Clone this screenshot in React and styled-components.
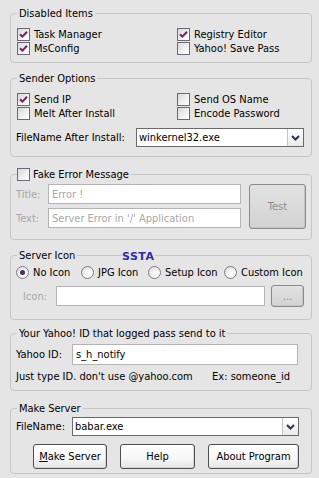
import React from "react";
import styled, { createGlobalStyle } from "styled-components";

const Global = createGlobalStyle`
  html, body { margin: 0; padding: 0; background: #e5e5e5; }
  body { font-family: "DejaVu Sans Condensed", "Liberation Sans", Arial, sans-serif; font-size: 11px; color: #000; }
  * { box-sizing: border-box; }
`;

const Page = styled.div`
  width: 302px;
  margin-left: 10px;
  padding-top: 6px;
  display: flex;
  flex-direction: column;
`;

const Group = styled.fieldset`
  position: relative;
  margin: ${(p) => p.$mt || 0}px 0 0 0;
  padding: ${(p) => p.$pt || 0}px 6px ${(p) => p.$pb || 0}px 5px;
  border: 1px solid #c6c6c6;
  border-radius: 4px;
  min-width: 0;
`;

const Legend = styled.legend`
  margin-left: 1px;
  padding: ${(p) => (p.$flush ? "0 2px 0 0" : "0 2px")};
  line-height: 15px;
  height: 15px;
`;

const LegendInner = styled.span`
  display: inline-flex;
  align-items: center;
  gap: 3px;
`;

const Grid2 = styled.div`
  display: grid;
  grid-template-columns: 160px 1fr;
  grid-auto-rows: 14px;
`;

const CheckRow = styled.label`
  display: flex;
  align-items: center;
  gap: 4px;
  height: 14px;
  padding-left: 1px;
  white-space: nowrap;
`;

const Box = styled.span`
  width: 13px;
  height: 13px;
  flex: none;
  border: 1px solid #6d6878;
  background: linear-gradient(135deg, #d8d8d8 0%, #f2f2f2 60%, #ffffff 100%);
  display: inline-flex;
  align-items: center;
  justify-content: center;
`;

const CheckBox = ({ checked }) => (
  <Box>
    {checked && (
      <svg width="9" height="9" viewBox="0 0 9 9">
        <path d="M1 4.2 L3.4 6.6 L8 1.8" fill="none" stroke="#7a1f58" strokeWidth="2" />
      </svg>
    )}
  </Box>
);

const Row = styled.div`
  display: flex;
  align-items: center;
  margin-top: ${(p) => p.$mt || 0}px;
  height: ${(p) => p.$h}px;
  gap: ${(p) => p.$gap || 0}px;
`;

const FieldLabel = styled.span`
  width: ${(p) => p.$w}px;
  flex: none;
  color: ${(p) => (p.$dim ? "#a8a8a8" : "#000")};
  padding-left: ${(p) => p.$pl || 0}px;
  white-space: nowrap;
`;

const TextInput = styled.div`
  width: ${(p) => p.$w}px;
  height: ${(p) => p.$h}px;
  flex: none;
  background: #fff;
  border: 1px solid ${(p) => (p.$dark ? "#6e6e6e" : "#b4b4b4")};
  color: ${(p) => (p.$dim ? "#a8a8a8" : "#000")};
  display: flex;
  align-items: center;
  padding-left: 3px;
  white-space: nowrap;
  overflow: hidden;
`;

const ComboWrap = styled.div`
  width: ${(p) => p.$w}px;
  height: ${(p) => p.$h}px;
  flex: none;
  background: #fff;
  border: 1px solid #6a6a6a;
  display: flex;
  align-items: stretch;
`;

const ComboText = styled.span`
  flex: 1;
  display: flex;
  align-items: center;
  padding-left: 2px;
`;

const ComboBtn = styled.span`
  width: 16px;
  border-left: 1px solid #c4c4c4;
  background: linear-gradient(180deg, #ffffff, #e9e9e9);
  display: flex;
  align-items: center;
  justify-content: center;
`;

const Combo = ({ w, h, value }) => (
  <ComboWrap $w={w} $h={h}>
    <ComboText>{value}</ComboText>
    <ComboBtn>
      <svg width="9" height="6" viewBox="0 0 9 6">
        <path d="M1 1 L4.5 4.5 L8 1" fill="none" stroke="#2a3550" strokeWidth="2" />
      </svg>
    </ComboBtn>
  </ComboWrap>
);

const Button = styled.button`
  width: ${(p) => p.$w}px;
  height: ${(p) => p.$h}px;
  flex: none;
  margin-left: ${(p) => p.$ml || 0}px;
  font: inherit;
  color: ${(p) => (p.$disabled ? "#8c8c8c" : "#000")};
  border: 1px solid ${(p) => (p.$disabled ? "#8a8a8a" : "#4d4d4d")};
  border-radius: 3px;
  background: ${(p) =>
    p.$disabled
      ? "linear-gradient(180deg, #e2e2e2, #d2d2d2)"
      : "linear-gradient(180deg, #ffffff 0%, #f6f6f6 60%, #e4e4e4 100%)"};
  box-shadow: inset -1px -1px 0 ${(p) => (p.$disabled ? "#c6c6c6" : "#d6d6d6")};
  padding: 0;
  display: flex;
  align-items: center;
  justify-content: center;
`;

const Under = styled.span`
  text-decoration: underline;
`;

const FakeGrid = styled.div`
  display: flex;
  gap: 8px;
`;

const FakeFields = styled.div`
  display: flex;
  flex-direction: column;
  gap: 4px;
`;

const RadioGrid = styled.div`
  display: grid;
  grid-template-columns: 65px 67px 76px auto;
  height: 14px;
`;

const RadioItem = styled.label`
  display: flex;
  align-items: center;
  gap: 4px;
  white-space: nowrap;
`;

const RadioCircle = styled.span`
  width: 13px;
  height: 13px;
  flex: none;
  border-radius: 50%;
  border: 1px solid #7c7a84;
  background: radial-gradient(circle at 70% 70%, #ffffff 0%, #f0f0f0 50%, #d6d6d6 100%);
  display: inline-flex;
  align-items: center;
  justify-content: center;
`;

const Dot = styled.span`
  width: 5px;
  height: 5px;
  border-radius: 50%;
  background: #4a2c5e;
`;

const Radio = ({ on, label }) => (
  <RadioItem>
    <RadioCircle>{on && <Dot />}</RadioCircle>
    {label}
  </RadioItem>
);

const Brand = styled.span`
  position: absolute;
  left: 111px;
  top: -12px;
  font-family: "DejaVu Sans", Verdana, sans-serif;
  font-weight: bold;
  font-size: 11px;
  letter-spacing: 0.5px;
  color: #2a2fa8;
  background: #e5e5e5;
  line-height: 12px;
`;

const Hint = styled.div`
  display: flex;
  justify-content: space-between;
  padding-right: 15px;
  margin-top: 4px;
  height: 14px;
  align-items: center;
`;

const Buttons = styled.div`
  display: flex;
  margin-top: 8px;
  padding-left: 17px;
`;

export default function App() {
  return (
    <>
      <Global />
      <Page>
        <Group $pt={6} $pb={7}>
          <Legend>Disabled Items</Legend>
          <Grid2>
            <CheckRow><CheckBox checked />Task Manager</CheckRow>
            <CheckRow><CheckBox checked />Registry Editor</CheckRow>
            <CheckRow><CheckBox checked />MsConfig</CheckRow>
            <CheckRow><CheckBox />Yahoo! Save Pass</CheckRow>
          </Grid2>
        </Group>

        <Group $mt={8} $pt={6} $pb={9}>
          <Legend>Sender Options</Legend>
          <Grid2>
            <CheckRow><CheckBox checked />Send IP</CheckRow>
            <CheckRow><CheckBox />Send OS Name</CheckRow>
            <CheckRow><CheckBox />Melt After Install</CheckRow>
            <CheckRow><CheckBox />Encode Password</CheckRow>
          </Grid2>
          <Row $mt={8} $h={19}>
            <FieldLabel $w={120}>FileName After Install:</FieldLabel>
            <Combo w={168} h={19} value="winkernel32.exe" />
          </Row>
        </Group>

        <Group $mt={10} $pt={2} $pb={10}>
          <Legend $flush>
            <LegendInner><CheckBox />Fake Error Message</LegendInner>
          </Legend>
          <FakeGrid>
            <FakeFields>
              <Row $h={20}>
                <FieldLabel $w={32} $dim>Title:</FieldLabel>
                <TextInput $w={193} $h={20} $dim>Error !</TextInput>
              </Row>
              <Row $h={20}>
                <FieldLabel $w={32} $dim>Text:</FieldLabel>
                <TextInput $w={193} $h={20} $dim>Server Error in '/' Application</TextInput>
              </Row>
            </FakeFields>
            <Button $w={57} $h={45} $disabled>Test</Button>
          </FakeGrid>
        </Group>

        <Group $mt={8} $pt={2} $pb={12}>
          <Legend>Server Icon</Legend>
          <Brand>SSTA</Brand>
          <RadioGrid>
            <Radio on label="No Icon" />
            <Radio label="JPG Icon" />
            <Radio label="Setup Icon" />
            <Radio label="Custom Icon" />
          </RadioGrid>
          <Row $mt={6} $h={22}>
            <FieldLabel $w={40} $pl={7} $dim>Icon:</FieldLabel>
            <TextInput $w={209} $h={20} />
            <Button $w={33} $h={22} $ml={6} $disabled>...</Button>
          </Row>
        </Group>

        <Group $mt={6} $pt={3} $pb={7}>
          <Legend>Your Yahoo! ID that logged pass send to it</Legend>
          <Row $h={21}>
            <FieldLabel $w={56}>Yahoo ID:</FieldLabel>
            <TextInput $w={226} $h={21}>s_h_notify</TextInput>
          </Row>
          <Hint>
            <span>Just type ID. don't use @yahoo.com</span>
            <span>Ex: someone_id</span>
          </Hint>
        </Group>

        <Group $mt={10} $pt={1} $pb={4}>
          <Legend>Make Server</Legend>
          <Row $h={19}>
            <FieldLabel $w={56}>FileName:</FieldLabel>
            <Combo w={227} h={19} value="babar.exe" />
          </Row>
          <Buttons>
            <Button $w={74} $h={25}><span><Under>M</Under>ake Server</span></Button>
            <Button $w={75} $h={25} $ml={13}>Help</Button>
            <Button $w={91} $h={25} $ml={13}>About Program</Button>
          </Buttons>
        </Group>
      </Page>
    </>
  );
}
